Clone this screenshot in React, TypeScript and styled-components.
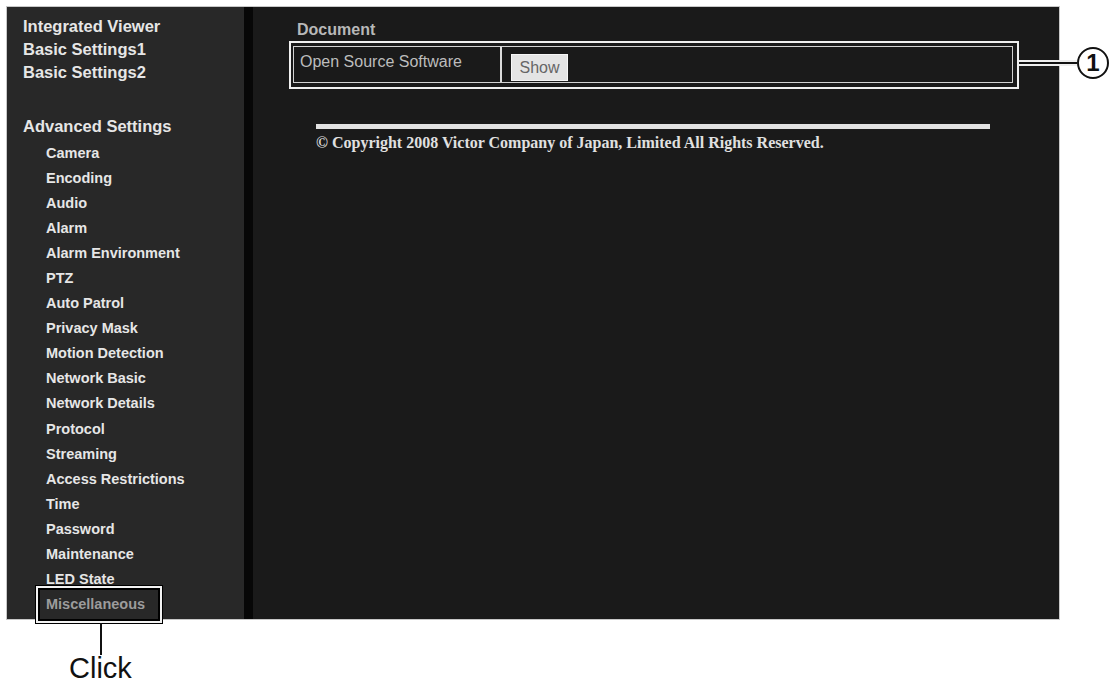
import React from "react";
import styled, { createGlobalStyle } from "styled-components";

const GlobalStyle = createGlobalStyle`
  html, body {
    margin: 0;
    padding: 0;
    background: #ffffff;
  }
  body {
    font-family: "Liberation Sans", Arial, sans-serif;
  }
`;

const Page = styled.div`
  position: relative;
  height: 681px;
  padding: 7px 0 0 7px;
  box-sizing: border-box;
  overflow: hidden;
  background: #ffffff;
`;

const Panel = styled.div`
  position: relative;
  display: flex;
  width: 1052px;
  height: 612px;
  background: #1a1a1a;
  box-shadow: 0 0 0 1px #c8c8c8;
`;

const Sidebar = styled.nav`
  width: 237px;
  flex: none;
  background: #282828;
  padding: 8px 0 0 16px;
  box-sizing: border-box;
  display: flex;
  flex-direction: column;
`;

const Divider = styled.div`
  width: 9px;
  flex: none;
  background: #070707;
`;

const TopItem = styled.div<{ $gap?: number }>`
  font-size: 16.5px;
  font-weight: bold;
  line-height: 23px;
  color: #e6e6e6;
  margin-top: ${(p) => p.$gap ?? 0}px;
  white-space: nowrap;
`;

const SubList = styled.div`
  margin: 2.5px 0 0 23px;
  display: flex;
  flex-direction: column;
`;

const SubItem = styled.div<{ $active?: boolean }>`
  position: relative;
  font-size: 14.5px;
  font-weight: bold;
  line-height: 25.1px;
  color: ${(p) => (p.$active ? "#9c9c9c" : "#e6e6e6")};
  white-space: nowrap;
`;

const Frame = styled.div`
  position: absolute;
  left: -10px;
  top: -6px;
  width: 126px;
  height: 37px;
  box-sizing: border-box;
  border: 2px solid #f2f2f2;
  box-shadow: 0 0 0 1px #000, inset 0 0 0 2px #000;
`;

const Leader = styled.div`
  position: absolute;
  left: 62px;
  top: calc(100% + 2px);
  width: 1.5px;
  height: 32px;
  background: #111;
`;

const ClickLabel = styled.div`
  position: absolute;
  left: 31px;
  top: 68px;
  font-family: "Liberation Sans", Arial, sans-serif;
  font-weight: normal;
  font-size: 29px;
  line-height: 24px;
  color: #111;
`;

const Main = styled.main`
  flex: 1;
  padding: 14px 0 0 36px;
  display: flex;
  flex-direction: column;
  align-items: flex-start;
`;

const SectionTitle = styled.div`
  margin-left: 8px;
  font-size: 16px;
  font-weight: bold;
  line-height: 18px;
  color: #b8b8b8;
`;

const Highlight = styled.div`
  position: relative;
  margin-top: 2px;
  width: 730px;
  box-sizing: border-box;
  border: 2px solid #f0f0f0;
  padding: 3px 4px 4px 2px;
`;

const SettingRow = styled.div`
  display: flex;
  height: 37px;
  box-sizing: border-box;
  border: 1px solid #d2d2d2;
`;

const LabelCell = styled.div`
  width: 208px;
  flex: none;
  box-sizing: border-box;
  border-right: 2px solid #dcdcdc;
  padding: 6px 0 0 6px;
  font-size: 16px;
  line-height: 18px;
  color: #bdbdbd;
  white-space: nowrap;
`;

const ValueCell = styled.div`
  flex: 1;
  padding: 7px 0 0 9px;
`;

const ShowButton = styled.button`
  width: 57px;
  height: 27px;
  padding: 0;
  border: 1px solid #f6f6f6;
  background: #e4e4e4;
  color: #666;
  font-family: "Liberation Sans", Arial, sans-serif;
  font-size: 16px;
  line-height: 25px;
  text-align: center;
`;

const Callout = styled.div`
  position: absolute;
  left: calc(100% + 2px);
  top: 4px;
  height: 32px;
  display: flex;
  align-items: center;
`;

const CalloutLine = styled.div`
  width: 58px;
  height: 2px;
  background: #111;
  box-shadow: 0 -2px 0 #eee, 0 2px 0 #eee;
`;

const CalloutBadge = styled.div`
  width: 32px;
  height: 32px;
  box-sizing: border-box;
  border: 2px solid #111;
  border-radius: 50%;
  background: #fff;
  display: flex;
  align-items: center;
  justify-content: center;
  font-size: 24px;
  font-weight: bold;
  line-height: 1;
  color: #111;
`;

const Footer = styled.div`
  margin: 35px 0 0 27px;
  display: flex;
  flex-direction: column;
`;

const Rule = styled.div`
  width: 674px;
  height: 5px;
  background: #e2e2e2;
`;

const Copyright = styled.div`
  margin-top: 5px;
  font-family: "Liberation Serif", "Times New Roman", serif;
  font-weight: bold;
  font-size: 16px;
  line-height: 18px;
  color: #e0e0e0;
  white-space: nowrap;
`;

const topItems = ["Integrated Viewer", "Basic Settings1", "Basic Settings2"];

const subItems = [
  "Camera",
  "Encoding",
  "Audio",
  "Alarm",
  "Alarm Environment",
  "PTZ",
  "Auto Patrol",
  "Privacy Mask",
  "Motion Detection",
  "Network Basic",
  "Network Details",
  "Protocol",
  "Streaming",
  "Access Restrictions",
  "Time",
  "Password",
  "Maintenance",
  "LED State",
];

export default function App() {
  return (
    <>
      <GlobalStyle />
      <Page>
        <Panel>
          <Sidebar>
            {topItems.map((t) => (
              <TopItem key={t}>{t}</TopItem>
            ))}
            <TopItem $gap={31}>Advanced Settings</TopItem>
            <SubList>
              {subItems.map((s) => (
                <SubItem key={s}>{s}</SubItem>
              ))}
              <SubItem $active>
                Miscellaneous
                <Frame>
                  <Leader />
                  <ClickLabel>Click</ClickLabel>
                </Frame>
              </SubItem>
            </SubList>
          </Sidebar>
          <Divider />
          <Main>
            <SectionTitle>Document</SectionTitle>
            <Highlight>
              <SettingRow>
                <LabelCell>Open Source Software</LabelCell>
                <ValueCell>
                  <ShowButton type="button">Show</ShowButton>
                </ValueCell>
              </SettingRow>
              <Callout>
                <CalloutLine />
                <CalloutBadge>1</CalloutBadge>
              </Callout>
            </Highlight>
            <Footer>
              <Rule />
              <Copyright>
                © Copyright 2008 Victor Company of Japan, Limited All Rights Reserved.
              </Copyright>
            </Footer>
          </Main>
        </Panel>
      </Page>
    </>
  );
}
